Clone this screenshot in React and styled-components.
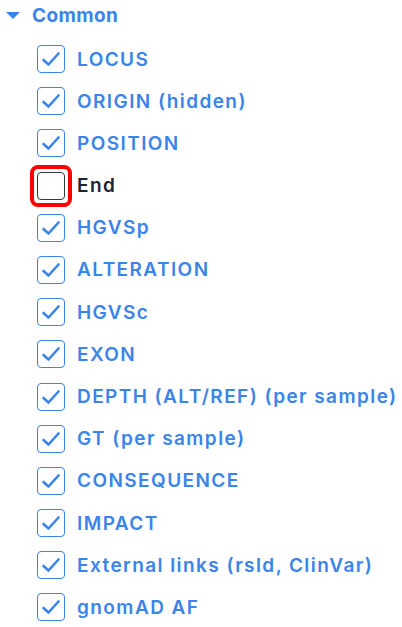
import React from "react";
import styled, { createGlobalStyle } from "styled-components";

const GlobalStyle = createGlobalStyle`
  body {
    margin: 0;
    background: #ffffff;
    font-family: Inter, "Noto Sans", sans-serif;
  }
`;

const columns = [
  { label: "LOCUS", checked: true },
  { label: "ORIGIN (hidden)", checked: true },
  { label: "POSITION", checked: true },
  { label: "End", checked: false, focused: true },
  { label: "HGVSp", checked: true },
  { label: "ALTERATION", checked: true },
  { label: "HGVSc", checked: true },
  { label: "EXON", checked: true },
  { label: "DEPTH (ALT/REF) (per sample)", checked: true },
  { label: "GT (per sample)", checked: true },
  { label: "CONSEQUENCE", checked: true },
  { label: "IMPACT", checked: true },
  { label: "External links (rsld, ClinVar)", checked: true },
  { label: "gnomAD AF", checked: true },
];

const Panel = styled.div`
  display: flex;
  flex-direction: column;
  padding: 3px 0 0 6px;
`;

const GroupHeader = styled.div`
  display: flex;
  align-items: center;
  gap: 12px;
  height: 24px;
  color: #3a84ea;
  font-size: 19px;
  font-weight: 700;
  letter-spacing: 0.02em;
`;

const Caret = styled.span`
  width: 0;
  height: 0;
  border-left: 7px solid transparent;
  border-right: 7px solid transparent;
  border-top: 7px solid #3a84ea;
`;

const List = styled.div`
  display: flex;
  flex-direction: column;
  gap: 14.2px;
  padding: 18px 0 0 31px;
`;

const Row = styled.label`
  display: flex;
  align-items: center;
  gap: 12px;
  height: 28px;
`;

const BoxWrap = styled.span`
  display: flex;
  align-items: center;
  justify-content: center;
  width: 28px;
  height: 28px;
  outline: ${(p) => (p.focused ? "4.5px solid #ff0000" : "none")};
  outline-offset: 3px;
  border-radius: 1px;
`;

const Box = styled.span`
  box-sizing: border-box;
  width: 28px;
  height: 28px;
  border-radius: 4px;
  border: 1.6px solid ${(p) => (p.checked ? "#3a84ea" : "#333a44")};
  display: flex;
  align-items: center;
  justify-content: center;
`;

const Label = styled.span`
  font-size: 19px;
  font-weight: 600;
  letter-spacing: 0.075em;
  color: ${(p) => (p.checked ? "#3a84ea" : "#1f2530")};
  white-space: nowrap;
`;

const Check = () => (
  <svg width="22" height="22" viewBox="0 0 22 22" fill="none">
    <path d="M3.5 12 L8.5 16.5 L18.5 5.5" stroke="#3a84ea" strokeWidth="2.6" strokeLinecap="round" strokeLinejoin="round" />
  </svg>
);

export default function App() {
  return (
    <>
      <GlobalStyle />
      <Panel>
        <GroupHeader>
          <Caret />
          Common
        </GroupHeader>
        <List>
          {columns.map((col) => (
            <Row key={col.label}>
              <BoxWrap focused={col.focused}>
                <Box checked={col.checked}>{col.checked && <Check />}</Box>
              </BoxWrap>
              <Label checked={col.checked}>{col.label}</Label>
            </Row>
          ))}
        </List>
      </Panel>
    </>
  );
}
